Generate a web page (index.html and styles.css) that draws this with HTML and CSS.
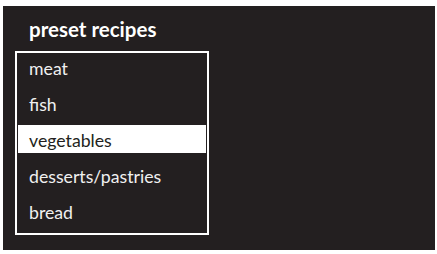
FILE: index.html
```html
<!DOCTYPE html>
<html>
<head>
<meta charset="utf-8">
<link rel="stylesheet" href="styles.css">
</head>
<body>
<div class="panel">
  <div class="title">preset recipes</div>
  <ul class="list">
    <li class="item">meat</li>
    <li class="item">fish</li>
    <li class="item selected">vegetables</li>
    <li class="item">desserts/pastries</li>
    <li class="item">bread</li>
  </ul>
</div>
</body>
</html>
```
FILE: styles.css
```css
html, body {
  margin: 0;
  padding: 0;
  background: #ffffff;
}
body {
  padding: 6px 2px 4px 3px;
  font-family: Lato, "Open Sans", sans-serif;
}
.panel {
  width: 432px;
  height: 244px;
  background: #231f20;
  box-sizing: border-box;
  padding: 11px 0 0 12px;
}
.title {
  color: #ffffff;
  font-weight: 700;
  font-size: 20.5px;
  line-height: 24px;
  height: 24px;
  padding-left: 14px;
  margin-bottom: 10px;
}
.list {
  list-style: none;
  margin: 0;
  padding: 0;
  width: 194px;
  height: 184px;
  box-sizing: border-box;
  border: 2px solid #ffffff;
}
.item {
  height: 28px;
  line-height: 31px;
  margin: 0 1px 8px 1px;
  padding-left: 11px;
  font-size: 17.7px;
  color: #f0f0f0;
}
.item.selected {
  background: #ffffff;
  color: #231f20;
}
```
